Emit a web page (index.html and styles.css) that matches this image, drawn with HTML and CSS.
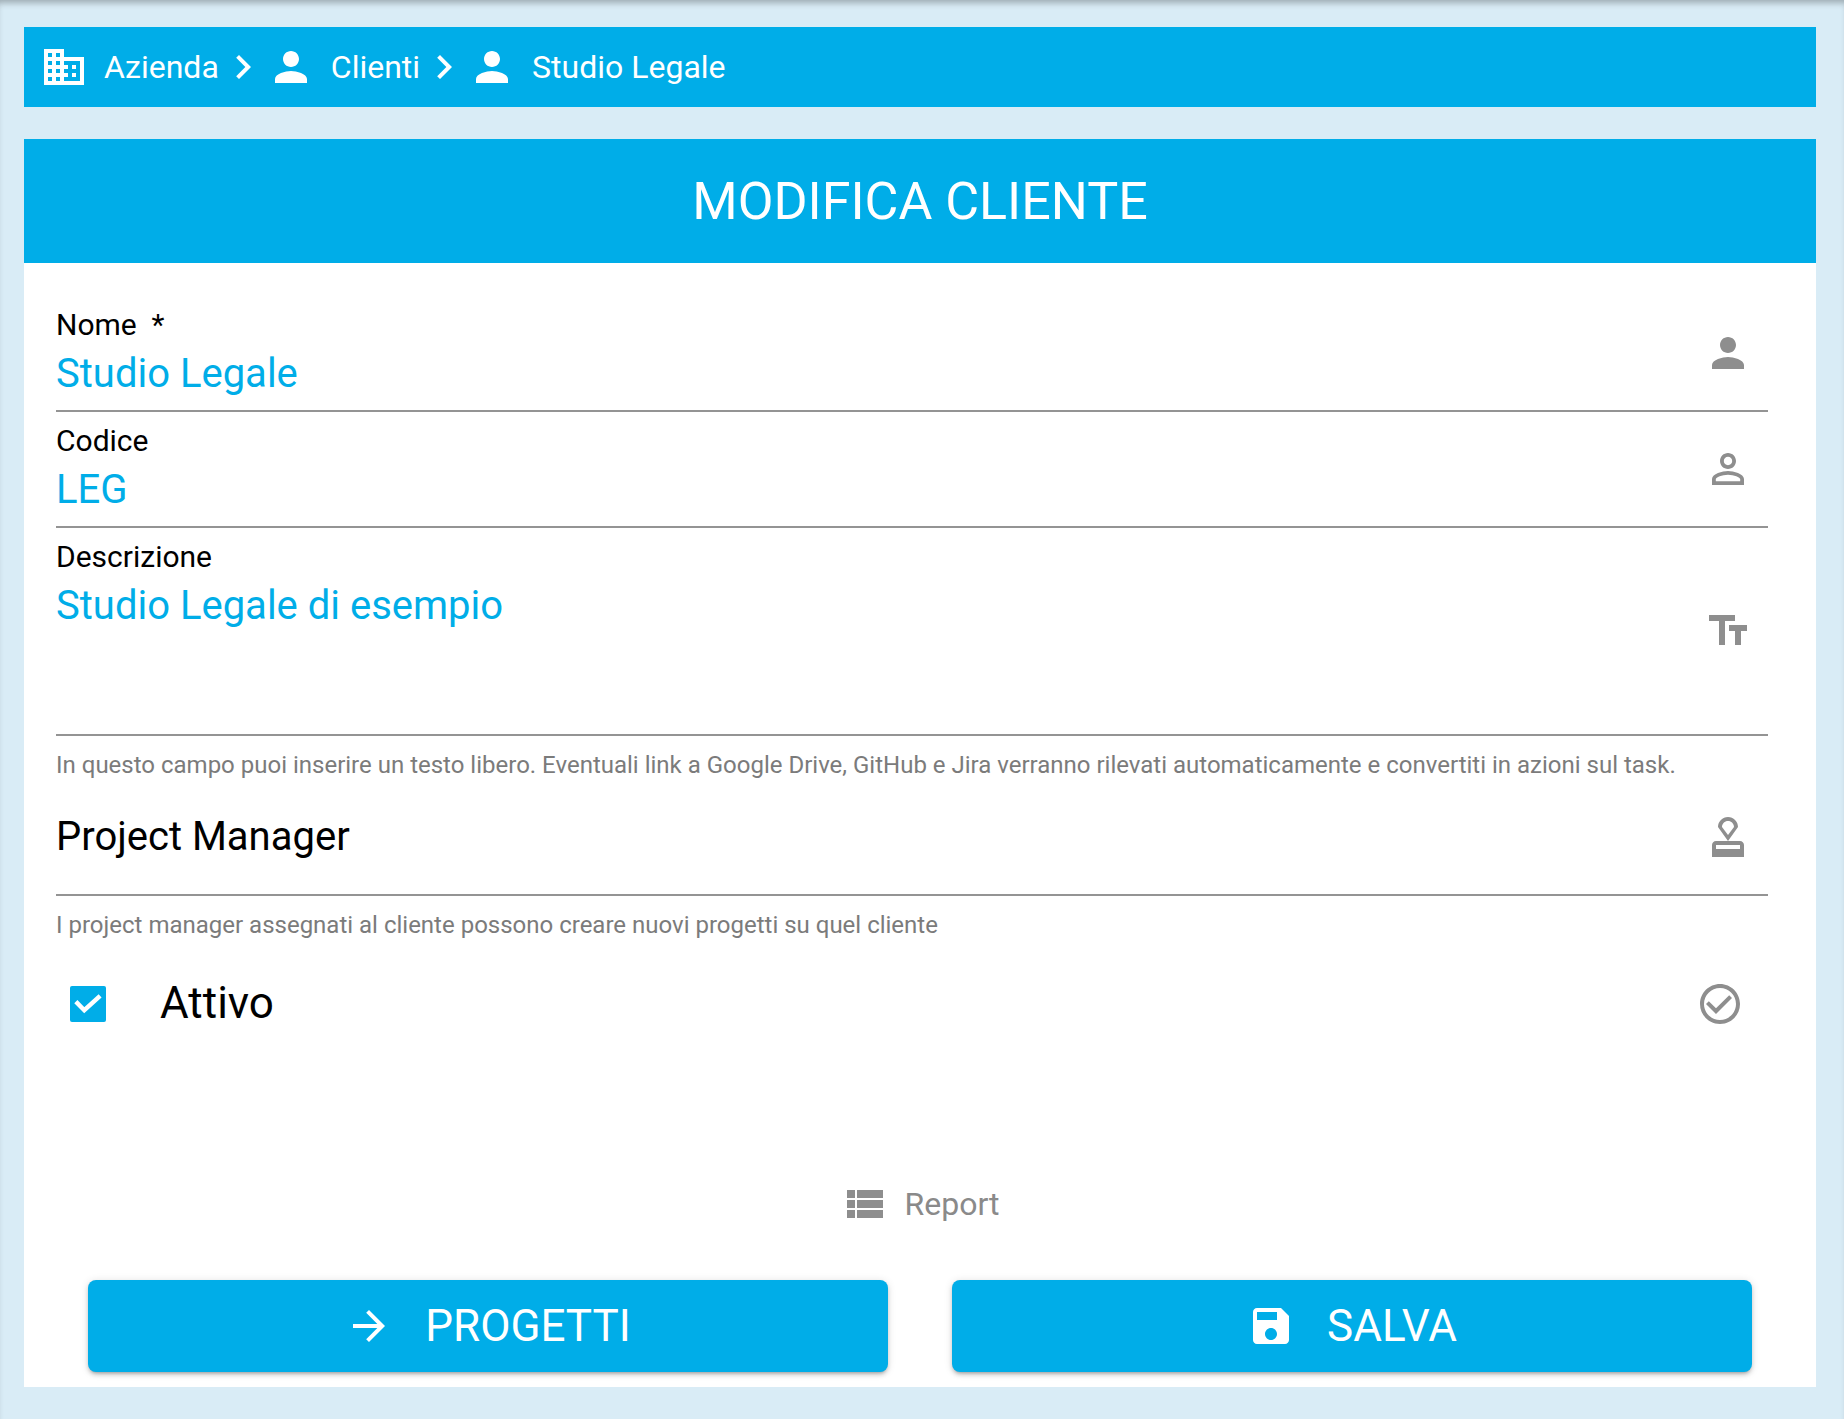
FILE: index.html
```html
<!DOCTYPE html>
<html lang="it">
<head>
<meta charset="utf-8">
<title>Modifica cliente</title>
<link rel="stylesheet" href="styles.css">
</head>
<body>
<nav class="crumbs">
  <svg class="icon" viewBox="0 0 24 24"><path d="M12 7V3H2v18h20V7H12zM6 19H4v-2h2v2zm0-4H4v-2h2v2zm0-4H4V9h2v2zm0-4H4V5h2v2zm4 12H8v-2h2v2zm0-4H8v-2h2v2zm0-4H8V9h2v2zm0-4H8V5h2v2zm10 12h-8v-2h2v-2h-2v-2h2v-2h-2V9h8v10zm-2-8h-2v2h2v-2zm0 4h-2v2h2v-2z"/></svg>
  <span class="crumb-text">Azienda</span>
  <svg class="icon chevron" viewBox="0 0 24 24"><path d="M10 6L8.59 7.41 13.17 12l-4.58 4.59L10 18l6-6z"/></svg>
  <svg class="icon" viewBox="0 0 24 24"><path d="M12 12c2.21 0 4-1.79 4-4s-1.79-4-4-4-4 1.79-4 4 1.79 4 4 4zm0 2c-2.67 0-8 1.34-8 4v2h16v-2c0-2.66-5.33-4-8-4z"/></svg>
  <span class="crumb-text">Clienti</span>
  <svg class="icon chevron" viewBox="0 0 24 24"><path d="M10 6L8.59 7.41 13.17 12l-4.58 4.59L10 18l6-6z"/></svg>
  <svg class="icon" viewBox="0 0 24 24"><path d="M12 12c2.21 0 4-1.79 4-4s-1.79-4-4-4-4 1.79-4 4 1.79 4 4 4zm0 2c-2.67 0-8 1.34-8 4v2h16v-2c0-2.66-5.33-4-8-4z"/></svg>
  <span class="crumb-text">Studio Legale</span>
</nav>

<main class="card">
  <h1 class="title">MODIFICA CLIENTE</h1>
  <div class="form">
    <div class="field">
      <div class="field-main">
        <div class="label">Nome &nbsp;*</div>
        <div class="value">Studio Legale</div>
      </div>
      <svg class="icon grey" viewBox="0 0 24 24"><path d="M12 12c2.21 0 4-1.79 4-4s-1.79-4-4-4-4 1.79-4 4 1.79 4 4 4zm0 2c-2.67 0-8 1.34-8 4v2h16v-2c0-2.66-5.33-4-8-4z"/></svg>
    </div>
    <div class="field">
      <div class="field-main">
        <div class="label">Codice</div>
        <div class="value">LEG</div>
      </div>
      <svg class="icon grey" viewBox="0 0 24 24"><path d="M12 5.9c1.16 0 2.1.94 2.1 2.1s-.94 2.1-2.1 2.1S9.9 9.16 9.9 8s.94-2.1 2.1-2.1m0 9c2.97 0 6.1 1.46 6.1 2.1v1.1H5.9V17c0-.64 3.13-2.1 6.1-2.1M12 4C9.79 4 8 5.79 8 8s1.79 4 4 4 4-1.79 4-4-1.79-4-4-4zm0 9c-2.67 0-8 1.34-8 4v3h16v-3c0-2.66-5.33-4-8-4z"/></svg>
    </div>
    <div class="field field-tall">
      <div class="field-main">
        <div class="label">Descrizione</div>
        <div class="value">Studio Legale di esempio</div>
      </div>
      <svg class="icon grey" viewBox="-0.5 0 24 24"><path d="M2 4v3h5v12h3V7h5V4H2zm19 5h-9v3h3v7h3v-7h3V9z"/></svg>
    </div>
    <p class="hint">In questo campo puoi inserire un testo libero. Eventuali link a Google Drive, GitHub e Jira verranno rilevati automaticamente e convertiti in azioni sul task.</p>
    <div class="field field-pm">
      <div class="pm-text">Project Manager</div>
      <svg class="icon grey" viewBox="0 0 24 24"><path d="M4 16v6h16v-6c0-1.1-.9-2-2-2H6c-1.1 0-2 .9-2 2zm14 2H6v-2h12v2zM12 2C9.24 2 7 4.24 7 7l5 7 5-7c0-2.76-2.24-5-5-5zm0 9L9 7c0-1.66 1.34-3 3-3s3 1.34 3 3l-3 4z"/></svg>
    </div>
    <p class="hint">I project manager assegnati al cliente possono creare nuovi progetti su quel cliente</p>
    <div class="check-row">
      <span class="checkbox">
        <svg viewBox="0 0 36 36"><path d="M5.85 15.6l8.45 8.6 15.8-14.35" fill="none" stroke="#fff" stroke-width="4.4"/></svg>
      </span>
      <span class="check-label">Attivo</span>
      <svg class="icon grey" viewBox="0 0 24 24"><path d="M16.59 7.58L10 14.17l-3.59-3.58L5 12l5 5 8-8zM12 2C6.48 2 2 6.48 2 12s4.48 10 10 10 10-4.48 10-10S17.52 2 12 2zm0 18c-4.42 0-8-3.58-8-8s3.58-8 8-8 8 3.58 8 8-3.58 8-8 8z"/></svg>
    </div>
  </div>
  <div class="report">
    <svg class="icon grey" viewBox="0 0 24 24"><path d="M3 14h4v-4H3v4zm0 5h4v-4H3v4zM3 9h4V5H3v4zm5 5h13v-4H8v4zm0 5h13v-4H8v4zM8 5v4h13V5H8z"/></svg>
    <span>Report</span>
  </div>
  <div class="actions">
    <button class="btn" type="button">
      <svg class="icon" viewBox="0 0 24 24"><path d="M12 4l-1.41 1.41L16.17 11H4v2h12.17l-5.58 5.59L12 20l8-8z"/></svg>
      <span>PROGETTI</span>
    </button>
    <button class="btn" type="button">
      <svg class="icon" viewBox="0 0 24 24"><path d="M17 3H5c-1.11 0-2 .9-2 2v14c0 1.1.89 2 2 2h14c1.1 0 2-.9 2-2V7l-4-4zm-5 16c-1.66 0-3-1.34-3-3s1.34-3 3-3 3 1.34 3 3-1.34 3-3 3zm3-10H5V5h10v4z"/></svg>
      <span>SALVA</span>
    </button>
  </div>
</main>
</body>
</html>
```

FILE: styles.css
```css
* { box-sizing: border-box; }
html, body { height: 100%; }
body {
  margin: 0;
  padding: 27px 28px 32px 24px;
  background: #d9ecf6;
  box-shadow: inset 0 6px 6px -3px rgba(0,0,0,.28);
  font-family: Roboto, "Liberation Sans", sans-serif;
  color: #000;
  overflow: hidden;
}
.icon { width: 48px; height: 48px; flex: none; fill: currentColor; display: block; }
.grey { color: #8e8e8e; }

.crumbs {
  height: 80px;
  background: #00ade8;
  color: #fff;
  display: flex;
  align-items: center;
  padding-left: 16px;
}
.crumb-text { font-size: 32px; margin-left: 16px; white-space: nowrap; }

.card { margin-top: 32px; background: #fff; height: 1248px; display: flex; flex-direction: column; }
.title {
  margin: 0;
  height: 124px;
  background: #00ade8;
  color: #fff;
  font-size: 52px;
  font-weight: 400;
  display: flex;
  align-items: center;
  justify-content: center;
}
.form { padding: 33px 48px 0 32px; }
.field {
  display: flex;
  align-items: center;
  height: 116px;
  padding-right: 16px;
  border-bottom: 2px solid #949494;
}
.field-tall { height: 208px; }
.field-pm { height: 99px; padding-bottom: 17px; }
.field-main { flex: 1; align-self: flex-start; padding-top: 12px; }
.label { font-size: 30px; line-height: 34px; }
.value { font-size: 40px; line-height: 48px; margin-top: 8px; color: #00ade8; }
.pm-text { flex: 1; font-size: 40px; line-height: 48px; }
.hint { margin: 13px 0 16px; font-size: 24px; line-height: 32px; color: #7b7b7b; white-space: nowrap; }
.check-row { display: flex; align-items: center; height: 48px; margin-top: 39px; padding: 0 24px 0 14px; }
.checkbox { width: 36px; height: 36px; background: #00ade8; border-radius: 2px; flex: none; }
.checkbox svg { display: block; width: 36px; height: 36px; }
.check-label { flex: 1; margin-left: 54px; font-size: 44px; line-height: 48px; margin-bottom: 2px; }
.report {
  margin-top: 152px;
  height: 48px;
  display: flex;
  align-items: center;
  justify-content: center;
  gap: 16px;
  font-size: 32px;
  color: #8a8a8a;
}
.actions { display: flex; justify-content: space-between; gap: 64px; margin-top: 52px; padding: 0 64px; }
.btn {
  flex: 1;
  height: 92px;
  border: 0;
  border-radius: 8px;
  background: #00ade8;
  color: #fff;
  font: 400 44px Roboto, "Liberation Sans", sans-serif;
  display: flex;
  align-items: center;
  justify-content: center;
  gap: 32px;
  box-shadow: 0 3px 3px -2px rgba(0,0,0,.2), 0 3px 4px rgba(0,0,0,.14), 0 1px 8px rgba(0,0,0,.12);
}
```
